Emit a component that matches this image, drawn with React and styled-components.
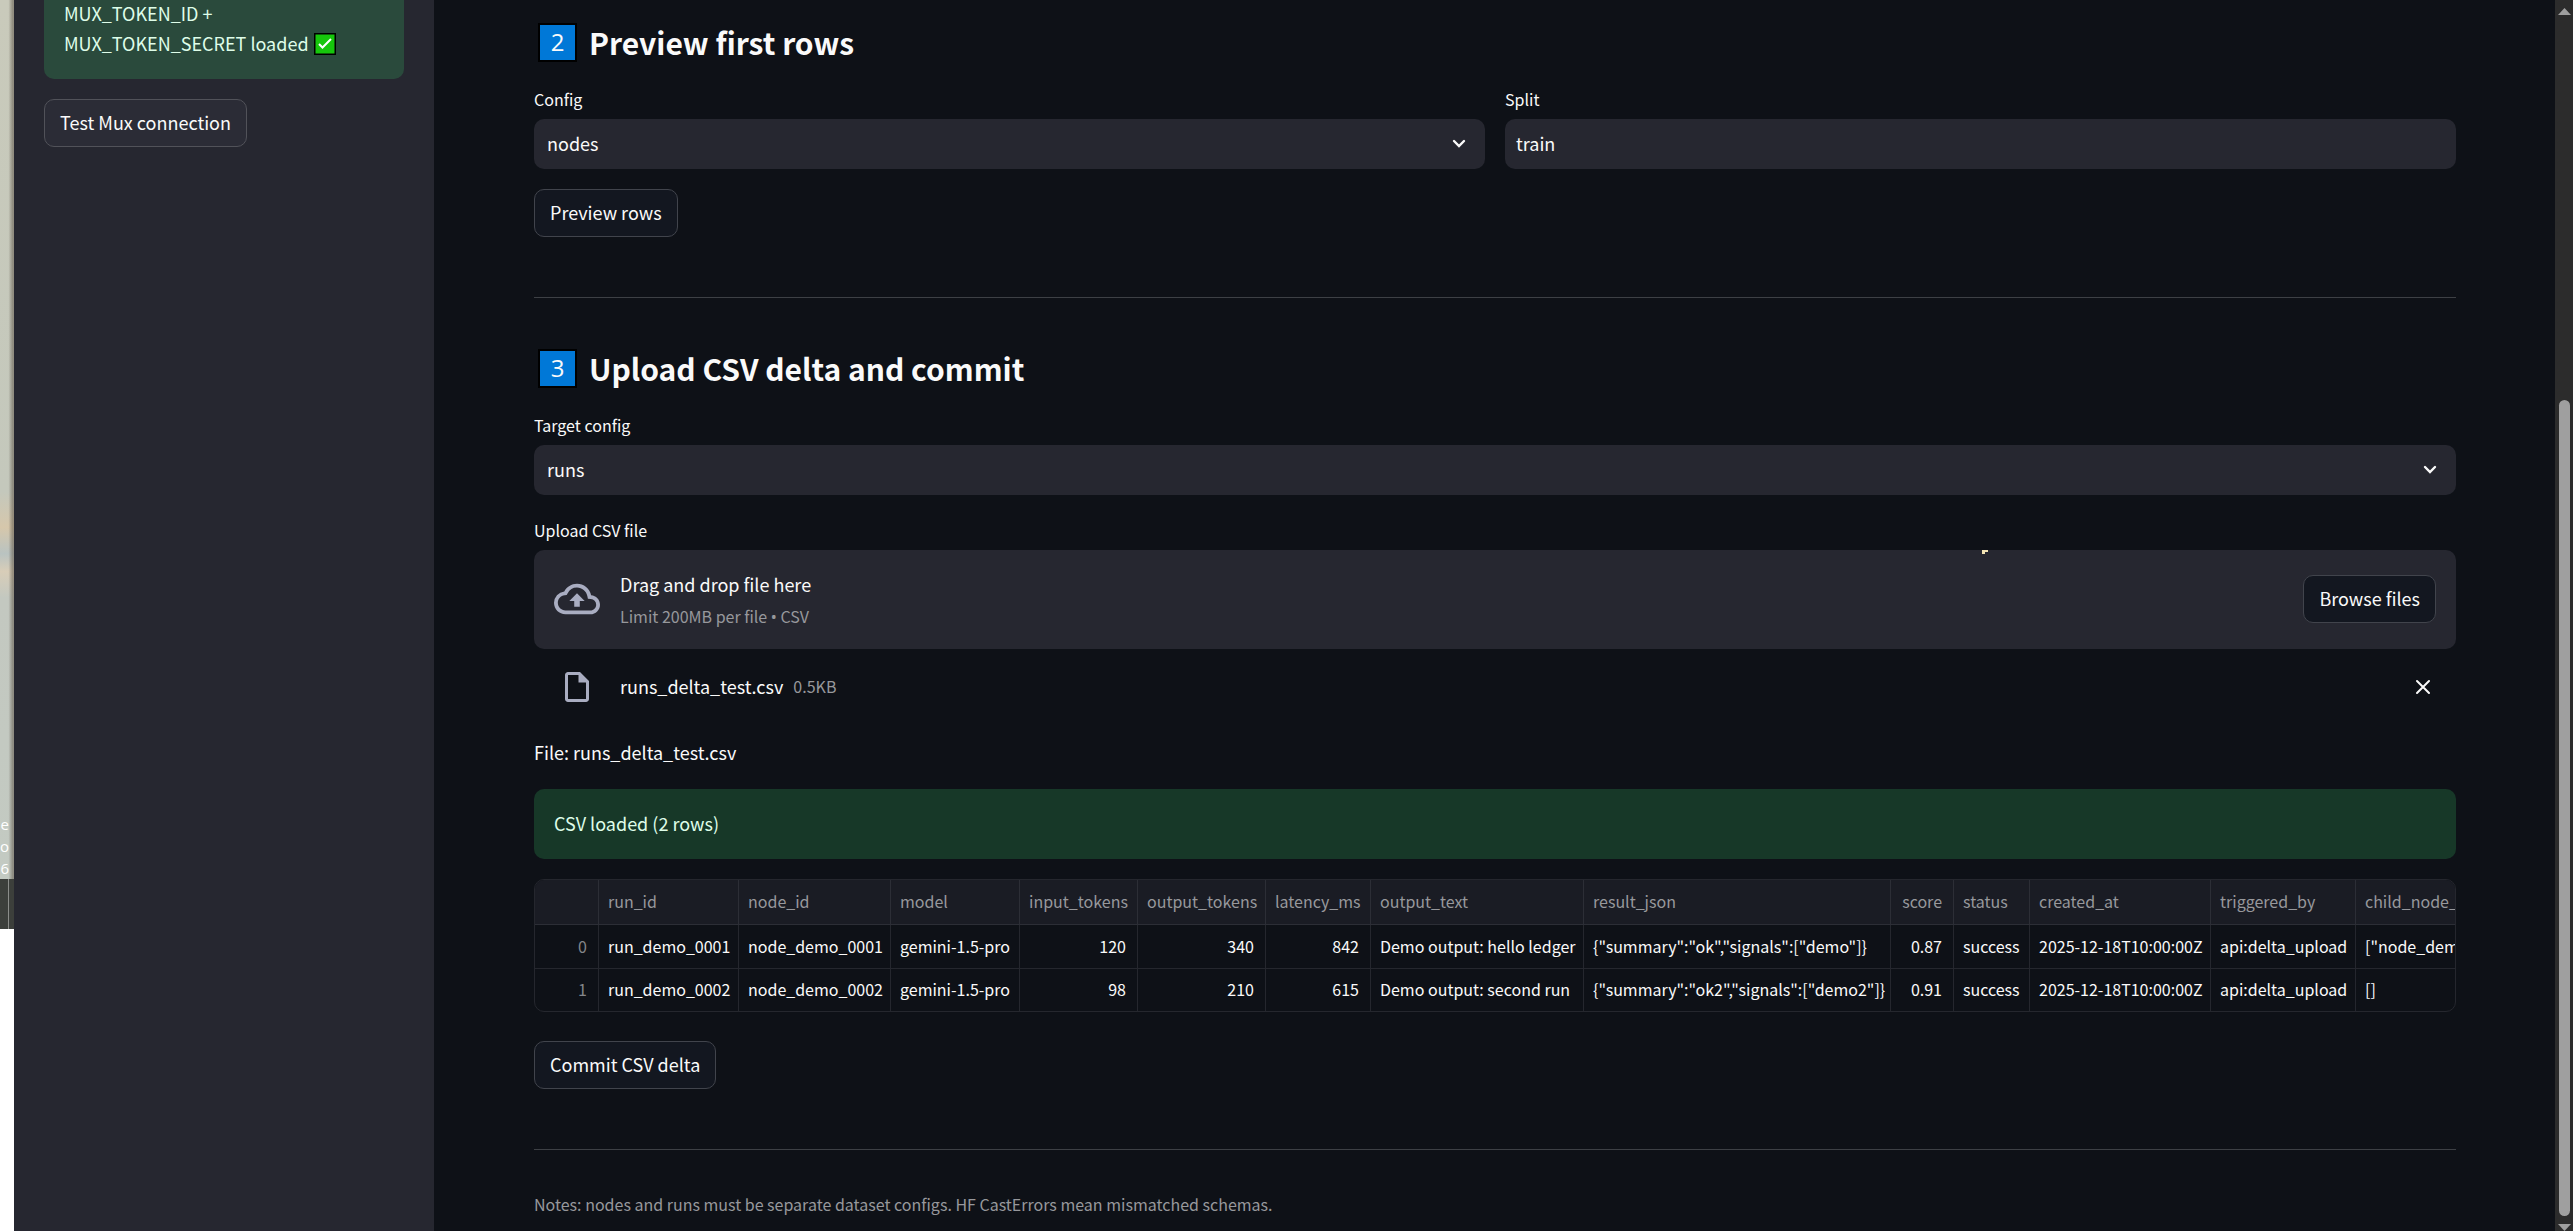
import React from 'react';
import styled, { createGlobalStyle } from 'styled-components';

const GlobalStyle = createGlobalStyle`
  * {
    box-sizing: border-box;
  }
  body {
    margin: 0;
    background: #0e1117;
    color: #fafafa;
    font-family: 'Noto Sans CJK SC', 'Noto Sans', sans-serif;
    font-size: 18px;
    line-height: 30px;
  }
  button, input, select {
    font: inherit;
    color: inherit;
  }
`
const Shell = styled.div`
  display: flex;
  height: 100vh;
  overflow: hidden;
`
/* slice of the desktop that shows beside the window */
const Desktop = styled.div`
  display: flex;
  flex: none;
  flex-direction: column;
  inline-size: 14px;
  overflow: hidden;
  background: #ffffff;
`
const Wallpaper = styled.div`
  align-items: flex-end;
  background:
    linear-gradient(90deg, transparent 60%, rgba(100, 92, 80, .55) 90%),
    linear-gradient(180deg, #c9cabb 0%, #c4c8bc 56%, #d6c7ab 60%, #b9c3c1 63%, #d8cdb8 65%, #c3c8c0 68%, #c3cac2 100%);
  block-size: 879px;
  color: #ffffff;
  display: flex;
  flex: none;
  flex-direction: column;
  font-family: 'Open Sans', sans-serif;
  font-size: 15px;
  justify-content: flex-end;
  line-height: 22px;
  padding-inline-end: 5px;
`
const Taskbar = styled.div`
  background: #3c3f3b;
  block-size: 50px;
  border-inline-end: 1px solid #8b8d8a;
  flex: none;
  inline-size: 9px;
  box-shadow: 5px 0 0 #3c3f3b;
`
const Sidebar = styled.aside`
  align-items: flex-start;
  background: #262730;
  display: flex;
  flex: none;
  flex-direction: column;
  gap: 20px;
  inline-size: 420px;
  padding: 0 30px;
`
const Alert = styled.div`
  align-self: stretch;
  background: rgba(61, 213, 109, .2);
  border-radius: ${({ $cut }) => ($cut ? '0 0 10px 10px' : '10px')};
  color: #dffde9;
  margin-block-start: ${({ $cut }) => ($cut ? '-2px' : '0')};
  padding: ${({ $cut }) => ($cut ? '0 20px 21px' : '19px 20px 21px')};
`
const CheckMark = styled.svg`
  block-size: 22px;
  inline-size: 22px;
  margin-inline-start: 1px;
  vertical-align: -4px;
`
const Button = styled.button`
  background: ${({ $side }) => ($side ? '#2b2c36' : '#131720')};
  block-size: 48px;
  border: 1px solid ${({ $side }) => ($side ? '#515259' : '#41444c')};
  border-radius: 10px;
  cursor: pointer;
  flex: none;
  padding: 0 15px 2px;
`
const Main = styled.main`
  align-items: stretch;
  display: flex;
  flex: 1;
  flex-direction: column;
  gap: 20px;
  min-inline-size: 0;
  padding: 15px 99px 0 100px;

  > button {
    align-self: flex-start;
  }
`
const Title = styled.h2`
  align-items: center;
  display: flex;
  font-size: 30px;
  font-weight: 600;
  gap: 12px;
  line-height: 54px;
  margin: 0;
`
const Keycap = styled.span`
  background: #0078d7;
  block-size: 39px;
  border: 2px solid #000000;
  font-family: 'Open Sans', sans-serif;
  font-size: 24px;
  font-weight: 500;
  inline-size: 39px;
  line-height: 34px;
  margin-inline-start: 4px;
  text-align: center;
`
const Columns = styled.div`
  display: grid;
  gap: 20px;
  grid-template-columns: 1fr 1fr;
`
const Field = styled.div`
  display: flex;
  flex-direction: column;
`
const Label = styled.label`
  font-size: 16px;
  line-height: 20px;
  margin-block-end: 10px;
`
const SelectBox = styled.div`
  align-items: center;
  display: grid;

  > * {
    grid-area: 1 / 1;
  }
`
const Select = styled.select`
  appearance: none;
  background: #262730;
  block-size: 50px;
  border: none;
  border-radius: 10px;
  inline-size: 100%;
  padding: 0 13px 2px;
`
const Chevron = styled.svg`
  block-size: 10px;
  inline-size: 14px;
  justify-self: end;
  margin-inline-end: 19px;
  pointer-events: none;
`
const TextInput = styled.input`
  background: #262730;
  block-size: 50px;
  border: none;
  border-radius: 10px;
  inline-size: 100%;
  padding: 0 11px 2px;
`
const Divider = styled.hr`
  background: #3d4045;
  block-size: 1px;
  border: none;
  flex: none;
  inline-size: 100%;
  margin: 40px 0 23px;
`
const Uploader = styled(Field)`
  margin-block-start: 5px;
`
const DropZone = styled.div`
  align-items: center;
  background: #262730;
  block-size: 99px;
  border-radius: 10px;
  display: flex;
  gap: 20px;
  padding: 0 20px 2px;
  position: relative;
`
const Pointer = styled.svg`
  block-size: 4px;
  inline-size: 6px;
  inset-block-start: 0;
  inset-inline-end: 468px;
  position: absolute;
`
const IconSlot = styled.div`
  align-items: center;
  color: #a9adc1;
  display: flex;
  flex: none;
  inline-size: 46px;
  justify-content: center;
`
const DropText = styled.div`
  display: flex;
  flex: 1;
  flex-direction: column;
  gap: 2px;
  padding-block-start: 3px;
`
const Small = styled.small`
  color: #97989c;
  display: block;
  font-size: 16px;
`
/* the CJK face draws its bullet full width */
const Dot = styled.span`
  font-family: 'Noto Sans', sans-serif;
`
const FileRow = styled.div`
  align-items: center;
  block-size: 68px;
  display: flex;
  gap: 20px;
  padding: 8px 20px 0;
`
const FileName = styled.div`
  align-items: center;
  display: flex;
  flex: 1;
  gap: 10px;
  padding-block-end: 2px;
`
const IconButton = styled.button`
  background: none;
  block-size: 26px;
  border: none;
  cursor: pointer;
  display: flex;
  align-items: center;
  justify-content: center;
  inline-size: 26px;
  padding: 0;
`
const Text = styled.p`
  margin: 0;
  padding-block-end: 2px;
`
const Frame = styled.div`
  border: 1px solid #25272e;
  border-radius: 10px;
  margin-block-end: 9px;
  overflow: hidden;
`
const Table = styled.table`
  border-collapse: separate;
  border-spacing: 0;
  font-size: 16px;
  inline-size: 1980px;
  line-height: 24px;
  table-layout: fixed;
`
const Cell = styled.td`
  block-size: ${({ $last }) => ($last ? '42px' : '44px')};
  border-block-end: ${({ $last }) => ($last ? 'none' : '1px solid #25272e')};
  border-inline-end: 1px solid #25272e;
  color: ${({ $dim }) => ($dim ? '#84868a' : '#fafafa')};
  font-weight: 400;
  overflow: hidden;
  padding: 0 11px 2px 9px;
  text-align: ${({ $right }) => ($right ? 'right' : 'left')};
  white-space: nowrap;
`
const HeadCell = styled(Cell)`
  background: #1a1c24;
  block-size: 45px;
  border-color: #2c2e36;
  color: #97989c;
`
const Note = styled.p`
  color: #97989c;
  font-size: 16px;
  line-height: 22px;
  margin: 0;
`
const Scrollbar = styled.div`
  align-items: center;
  background: #2c2c2c;
  display: flex;
  flex: none;
  flex-direction: column;
  inline-size: 18px;
  justify-content: space-between;
  padding-block-start: 8px;
`
const Thumb = styled.div`
  background: #9f9f9f;
  border-radius: 6px;
  flex: 1;
  inline-size: 11px;
  margin: 385px 0 8px;
`
const Arrow = styled.svg`
  block-size: 7px;
  flex: none;
  inline-size: 13px;
`

const columns = [
  { name: '', width: 64, right: true },
  { name: 'run_id', width: 140 },
  { name: 'node_id', width: 152 },
  { name: 'model', width: 129 },
  { name: 'input_tokens', width: 118, right: true },
  { name: 'output_tokens', width: 128, right: true },
  { name: 'latency_ms', width: 105, right: true },
  { name: 'output_text', width: 213 },
  { name: 'result_json', width: 307 },
  { name: 'score', width: 63, right: true },
  { name: 'status', width: 76 },
  { name: 'created_at', width: 181 },
  { name: 'triggered_by', width: 145 },
  { name: 'child_node_ids', width: 159 },
]

const rows = [
  ['0', 'run_demo_0001', 'node_demo_0001', 'gemini-1.5-pro', '120', '340', '842', 'Demo output: hello ledger',
    '{"summary":"ok","signals":["demo"]}', '0.87', 'success', '2025-12-18T10:00:00Z', 'api:delta_upload', '["node_demo_0002"]'],
  ['1', 'run_demo_0002', 'node_demo_0002', 'gemini-1.5-pro', '98', '210', '615', 'Demo output: second run',
    '{"summary":"ok2","signals":["demo2"]}', '0.91', 'success', '2025-12-18T10:00:00Z', 'api:delta_upload', '[]'],
]

function SelectField({ id, label, value }) {
  return (
    <Field>
      <Label htmlFor={id}>{label}</Label>
      <SelectBox>
        <Select id={id} defaultValue={value}>
          <option>nodes</option>
          <option>runs</option>
        </Select>
        <Chevron viewBox="0 0 14 10" aria-hidden="true">
          <path d="M2 2l5 5 5-5" fill="none" stroke="#fafafa" strokeWidth="2.4" strokeLinecap="round" />
        </Chevron>
      </SelectBox>
    </Field>
  )
}

function DataTable() {
  return (
    <Frame>
      <Table>
        <colgroup>
          {columns.map((c) => <col key={c.name} width={c.width} />)}
        </colgroup>
        <thead>
          <tr>
            {columns.map((c) => <HeadCell as="th" key={c.name} $right={c.right}>{c.name}</HeadCell>)}
          </tr>
        </thead>
        <tbody>
          {rows.map((row, r) => (
            <tr key={row[0]}>
              {row.map((value, i) => (
                <Cell key={columns[i].name} $right={columns[i].right} $dim={i === 0} $last={r === rows.length - 1}>
                  {value}
                </Cell>
              ))}
            </tr>
          ))}
        </tbody>
      </Table>
    </Frame>
  )
}

export default function App() {
  return (
    <Shell>
      <GlobalStyle />
      <Desktop>
        <Wallpaper>
          <span>e</span>
          <span>o</span>
          <span>06</span>
        </Wallpaper>
        <Taskbar />
      </Desktop>
      <Sidebar>
        <Alert $cut>
          MUX_TOKEN_ID +<br />
          MUX_TOKEN_SECRET loaded{' '}
          <CheckMark viewBox="0 0 22 22" role="img" aria-label="done">
            <rect width="22" height="22" fill="#000000" />
            <rect x="1.5" y="1.5" width="19" height="19" fill="#16c60c" />
            <path d="M5 11l3.5 3.5L17 6" fill="none" stroke="#ffffff" strokeWidth="2" />
          </CheckMark>
        </Alert>
        <Button $side>Test Mux connection</Button>
      </Sidebar>
      <Main>
        <Title><Keycap>2</Keycap> Preview first rows</Title>
        <Columns>
          <SelectField id="config" label="Config" value="nodes" />
          <Field>
            <Label htmlFor="split">Split</Label>
            <TextInput id="split" defaultValue="train" />
          </Field>
        </Columns>
        <Button>Preview rows</Button>
        <Divider />
        <Title><Keycap>3</Keycap> Upload CSV delta and commit</Title>
        <SelectField id="target" label="Target config" value="runs" />
        <Uploader>
          <Label htmlFor="browse">Upload CSV file</Label>
          <DropZone>
            <IconSlot>
              <svg width="46" height="46" viewBox="0 0 24 24" fill="currentColor" aria-hidden="true">
                <path d="M19.35 10.04A7.49 7.49 0 0 0 12 4C9.11 4 6.6 5.64 5.35 8.04A5.994 5.994 0 0 0 0 14c0 3.31 2.69 6 6 6h13c2.76 0 5-2.24 5-5 0-2.64-2.05-4.78-4.65-4.96zM19 18H6c-2.21 0-4-1.79-4-4 0-2.05 1.53-3.76 3.56-3.97l1.07-.11.5-.95A5.469 5.469 0 0 1 12 6c2.62 0 4.88 1.86 5.39 4.43l.3 1.5 1.53.11A2.98 2.98 0 0 1 22 15c0 1.65-1.35 3-3 3zM8 13h2.55v3h2.9v-3H16l-4-4z" />
              </svg>
            </IconSlot>
            <DropText>
              <span>Drag and drop file here</span>
              <Small>Limit 200MB per file <Dot>•</Dot> CSV</Small>
            </DropText>
            <Button id="browse">Browse files</Button>
            <Pointer viewBox="0 0 6 4" aria-hidden="true">
              <path d="M0 0h6v2H3v2H0z" fill="#f3e3b4" />
            </Pointer>
          </DropZone>
          <FileRow>
            <IconSlot>
              <svg width="36" height="36" viewBox="0 0 24 24" fill="currentColor" aria-hidden="true">
                <path d="M14 2H6c-1.1 0-1.99.9-1.99 2L4 20c0 1.1.89 2 1.99 2H18c1.1 0 2-.9 2-2V8l-6-6zM6 20V4h7v5h5v11H6z" />
              </svg>
            </IconSlot>
            <FileName>
              runs_delta_test.csv
              <Small>0.5KB</Small>
            </FileName>
            <IconButton aria-label="Remove file">
              <svg width="16" height="16" viewBox="0 0 16 16" aria-hidden="true">
                <path d="M2 2l12 12M14 2L2 14" stroke="#fafafa" strokeWidth="2" strokeLinecap="round" />
              </svg>
            </IconButton>
          </FileRow>
        </Uploader>
        <Text>File: runs_delta_test.csv</Text>
        <Alert>CSV loaded (2 rows)</Alert>
        <DataTable />
        <Button>Commit CSV delta</Button>
        <Divider />
        <Note>Notes: nodes and runs must be separate dataset configs. HF CastErrors mean mismatched schemas.</Note>
      </Main>
      <Scrollbar>
        <Arrow viewBox="0 0 13 7" aria-hidden="true"><path d="M0 7l6.5-7L13 7z" fill="#9f9f9f" /></Arrow>
        <Thumb />
        <Arrow viewBox="0 0 13 7" aria-hidden="true"><path d="M0 0l6.5 7L13 0z" fill="#9f9f9f" /></Arrow>
      </Scrollbar>
    </Shell>
  )
};
